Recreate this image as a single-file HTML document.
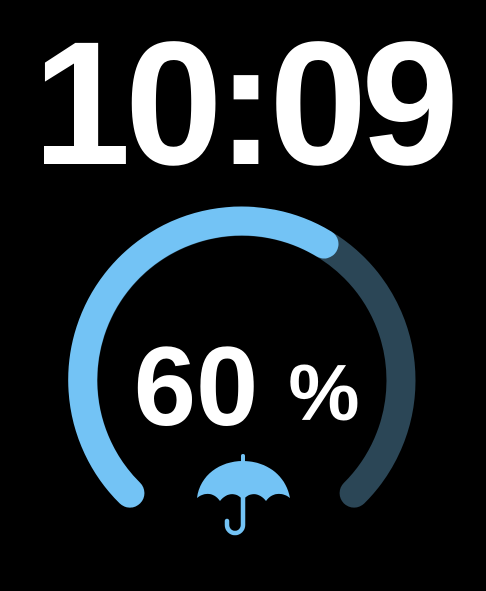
<!DOCTYPE html>
<html><head><style>
html,body{margin:0;padding:0;background:#000;}
body{width:486px;height:591px;position:relative;overflow:hidden;font-family:"Liberation Sans",sans-serif;}
.t{position:absolute;left:0;width:486px;top:16px;text-align:center;color:#fff;font-weight:bold;font-size:176px;letter-spacing:-6px;line-height:176px;}
</style></head><body>
<div class="t">10:09</div>
<svg width="486" height="591" style="position:absolute;left:0;top:0">
<path d="M129.9,493.1 A159,159 0 1 1 354.1,493.1" fill="none" stroke="#2B4656" stroke-width="29" stroke-linecap="round"/>
<path d="M129.9,493.1 A159,159 0 0 1 324,244" fill="none" stroke="#73C3F5" stroke-width="29" stroke-linecap="round"/>
<text x="196" y="425" fill="#fff" font-family="Liberation Sans" font-weight="bold" font-size="112" text-anchor="middle">60</text>
<text x="324" y="420" fill="#fff" font-family="Liberation Sans" font-weight="bold" font-size="80" text-anchor="middle">%</text>
<g fill="#73C3F5">
<rect x="241" y="454" width="4" height="10" rx="2"/>
<path d="M197,498 C200,475 220,461 243,461 C266,461 286,475 290,498 C283,492 272,492 266,501 C260,493 250,491 243,500 C236,491 226,493 220,501 C214,492 204,492 197,498 Z"/>
</g>
<path d="M243,498 V525 A8,8 0 0 1 227,525 V521" fill="none" stroke="#73C3F5" stroke-width="4.5" stroke-linecap="round"/>
</svg>
</body></html>
